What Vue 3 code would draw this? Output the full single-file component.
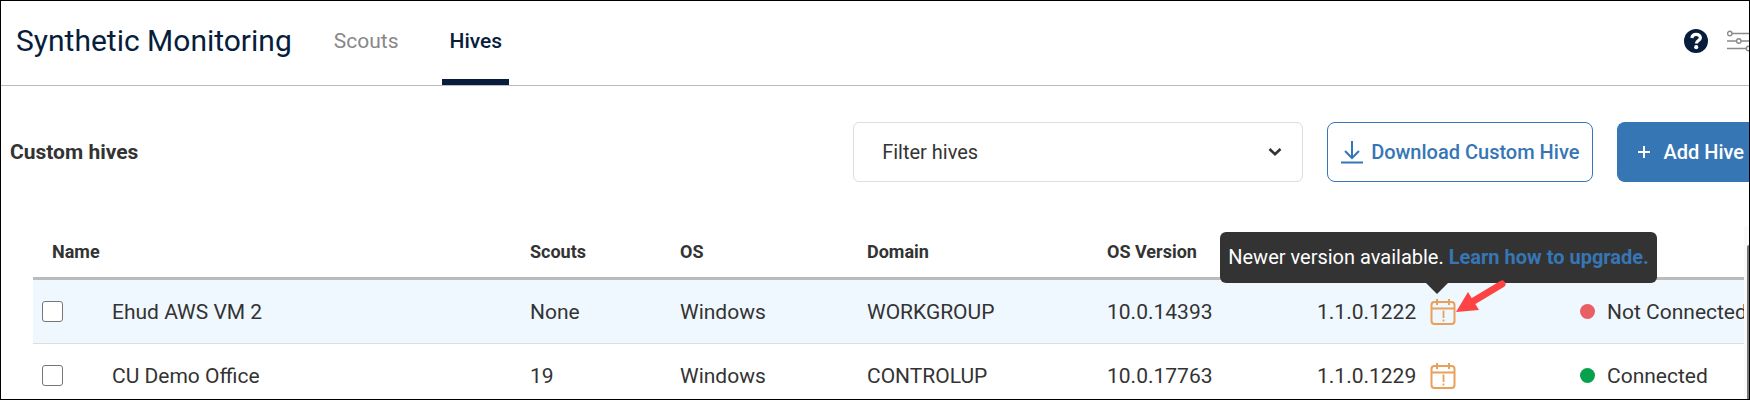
<template>
    <div class="page">
        <header class="topbar">
            <h1 class="title">Synthetic Monitoring</h1>
            <nav class="tabs">
                <a v-for="tab in tabs" :key="tab" href="#" class="tab" :class="{ active: tab === current }"
                    @click.prevent="current = tab">{{ tab }}</a>
            </nav>
            <div class="tools">
                <button class="icon_btn" type="button" aria-label="Help">
                    <svg width="24" height="24" viewBox="0 0 24 24">
                        <circle cx="12" cy="12" r="12" fill="#071d3b" />
                        <path d="M7.800 9 C8.300 6.400 10 5.400 12.100 5.400 C14.500 5.400 16.400 6.800 16.400 8.800 C16.400 11.600 12.400 11.500 12.400 14.500"
                            fill="none" stroke="#fff" stroke-width="3.200" />
                        <circle cx="12.200" cy="18.200" r="2.100" fill="#fff" />
                    </svg>
                </button>
                <button class="icon_btn" type="button" aria-label="Settings">
                    <svg width="22" height="22" viewBox="0 0 22 22" fill="none" stroke="#8b8b8b" stroke-width="1.400">
                        <path d="M5 3.500H22M0 11H9M14 11H22M0 18.500H19" />
                        <circle cx="2.800" cy="3.500" r="2.200" />
                        <circle cx="11.800" cy="11" r="2.200" />
                        <circle cx="21.500" cy="18.500" r="2.200" />
                    </svg>
                </button>
            </div>
        </header>

        <section class="toolbar">
            <h2 class="subtitle">Custom hives</h2>
            <div class="filter">
                <select v-model="filter" aria-label="Filter hives">
                    <option value="">Filter hives</option>
                </select>
                <svg class="chevron" width="14" height="10" viewBox="0 0 14 10">
                    <path d="M1.500 2L7 7.300L12.500 2" fill="none" stroke="#333" stroke-width="2.600" />
                </svg>
            </div>
            <button class="btn download" type="button">
                <svg width="22" height="24" viewBox="0 0 22 24" fill="none" stroke="#3676b5" stroke-width="2">
                    <path d="M11 1V18M4 11L11 18L18 11M0 22.500H22" />
                </svg>
                Download Custom Hive
            </button>
            <button class="btn add" type="button">
                <svg width="12" height="12" viewBox="0 0 12 12">
                    <path d="M6 0V12M0 6H12" stroke="#fff" stroke-width="2" />
                </svg>
                Add Hive
            </button>
        </section>

        <div class="list">
            <table>
                <colgroup>
                    <col class="c_check">
                    <col class="c_name">
                    <col class="c_scouts">
                    <col class="c_os">
                    <col class="c_domain">
                    <col class="c_osver">
                    <col class="c_version">
                    <col class="c_status">
                </colgroup>
                <thead>
                    <tr>
                        <th colspan="2" class="first">Name</th>
                        <th>Scouts</th>
                        <th>OS</th>
                        <th>Domain</th>
                        <th>OS Version</th>
                        <th></th>
                        <th></th>
                    </tr>
                </thead>
                <tbody>
                    <tr v-for="(hive, i) in hives" :key="hive.name" :class="{ hovered: i === 0 }">
                        <td class="check"><input type="checkbox" v-model="hive.checked" :aria-label="hive.name"></td>
                        <td>{{ hive.name }}</td>
                        <td>{{ hive.scouts }}</td>
                        <td>{{ hive.os }}</td>
                        <td>{{ hive.domain }}</td>
                        <td>{{ hive.osVersion }}</td>
                        <td>
                            <div class="version">
                                {{ hive.version }}
                                <span class="update">
                                    <svg width="26" height="26" viewBox="0 0 26 26" fill="none" stroke="#e9a05b" stroke-width="2">
                                        <rect x="1.500" y="3" width="23" height="22" rx="3" />
                                        <path d="M2 9.500H24M7 0V6M19 0V6" />
                                        <path d="M13.500 11.500V19M13.500 20.500V22.500" stroke-width="1.800" />
                                    </svg>
                                    <span v-if="i === 0" class="tooltip" role="tooltip">
                                        Newer version available. <a href="#">Learn how to upgrade.</a>
                                    </span>
                                    <svg v-if="i === 0" class="pointer" width="52" height="34" viewBox="0 0 52 34">
                                        <path d="M46 5L16 23" stroke="#fd4343" stroke-width="7" stroke-linecap="round" />
                                        <path d="M0 33L12 13L23 31Z" fill="#fd4343" />
                                    </svg>
                                </span>
                            </div>
                        </td>
                        <td>
                            <div class="status">
                                <i class="dot" :class="{ on: hive.connected }"></i>
                                {{ hive.connected ? 'Connected' : 'Not Connected' }}
                            </div>
                        </td>
                    </tr>
                </tbody>
            </table>
            <div class="scroll">
                <div class="thumb"></div>
            </div>
        </div>
    </div>
</template>

<script setup lang='js'>
import { ref } from 'vue'

const tabs = ['Scouts', 'Hives'];
const current = ref('Hives');
const filter = ref('');

const hives = ref([
    { name: 'Ehud AWS VM 2', scouts: 'None', os: 'Windows', domain: 'WORKGROUP', osVersion: '10.0.14393', version: '1.1.0.1222', connected: false, checked: false },
    { name: 'CU Demo Office', scouts: '19', os: 'Windows', domain: 'CONTROLUP', osVersion: '10.0.17763', version: '1.1.0.1229', connected: true, checked: false },
]);
</script>

<style>
body {
    margin: 0;
    background: #fff;
}
</style>

<style scoped>
.page {
    height: 100vh;
    box-sizing: border-box;
    overflow: hidden;
    border: 1px solid #000;
    font-family: Roboto, "Liberation Sans", sans-serif;
    font-size: 21px;
    color: #333;
}

.topbar {
    display: flex;
    height: 84px;
    padding-left: 15px;
    border-bottom: 1px solid #bbb;
    color: #071d3b;
}

.title {
    margin: 0;
    font-size: 30px;
    line-height: 80px;
    font-weight: 400;
}

.tabs {
    display: flex;
    gap: 37px;
    margin-left: 35px;
}

.tab {
    box-sizing: border-box;
    padding: 0 7px;
    line-height: 80px;
    color: #888;
    text-decoration: none;
}

.tab.active {
    border-bottom: 6px solid #071d3b;
    font-weight: 500;
    color: #071d3b;
}

.tools {
    display: flex;
    align-items: center;
    gap: 19px;
    height: 80px;
    margin-left: auto;
}

.icon_btn {
    display: flex;
    padding: 0;
    border: 0;
    background: none;
}

.toolbar {
    display: flex;
    align-items: center;
    gap: 24px;
    padding: 36px 0 44px 9px;
}

.subtitle {
    flex: 1;
    margin: 0;
    font-size: 21px;
    font-weight: 700;
}

.filter {
    position: relative;
    width: 450px;
}

.filter select {
    display: block;
    appearance: none;
    box-sizing: border-box;
    width: 100%;
    height: 60px;
    padding: 0 28px;
    border: 1px solid #ddd;
    border-radius: 6px;
    background: #fff;
    font: inherit;
    font-size: 20px;
    color: #333;
}

.chevron {
    position: absolute;
    right: 21px;
    top: 25px;
    pointer-events: none;
}

.btn {
    display: flex;
    align-items: center;
    box-sizing: border-box;
    height: 60px;
    border: 1px solid #3676b5;
    font: inherit;
    font-size: 20px;
    font-weight: 500;
    white-space: nowrap;
}

.download {
    gap: 8px;
    padding: 0 13px;
    border-radius: 8px;
    background: #fff;
    color: #3676b5;
}

.add {
    gap: 13px;
    padding: 0 5px 0 20px;
    border-radius: 8px 0 0 8px;
    border-right: 0;
    background: #3676b5;
    color: #fff;
}

.list {
    display: flex;
    padding-left: 32px;
}

table {
    flex: 1;
    table-layout: fixed;
    width: 100%;
    border-collapse: separate;
    border-spacing: 0;
}

.c_check {
    width: 79px;
}

.c_name {
    width: 418px;
}

.c_scouts {
    width: 150px;
}

.c_os {
    width: 187px;
}

.c_domain {
    width: 240px;
}

.c_osver {
    width: 210px;
}

.c_version {
    width: 263px;
}

.c_status {
    width: 164px;
}

th {
    height: 51px;
    padding: 0;
    border-bottom: 3px solid #bbb;
    font-size: 18px;
    font-weight: 700;
    text-align: left;
}

th.first {
    padding-left: 19px;
}

td {
    height: 63px;
    padding: 0;
    border-bottom: 1px solid #ddd;
    white-space: nowrap;
}

.hovered td {
    background: #f0f8ff;
}

.check {
    padding-left: 9px;
}

.check input {
    display: block;
    appearance: none;
    box-sizing: border-box;
    width: 21px;
    height: 21px;
    margin: 0;
    border: 1px solid #767676;
    border-radius: 3px;
    background: #fff;
}

.version {
    display: flex;
    align-items: center;
    gap: 14px;
}

.update {
    position: relative;
    display: flex;
}

.tooltip {
    position: absolute;
    left: -210px;
    bottom: 42px;
    padding: 0 8px;
    border-radius: 6px;
    background: #333;
    font-size: 20px;
    line-height: 51px;
    color: #fff;
}

.tooltip::after {
    content: "";
    position: absolute;
    left: 206px;
    top: 100%;
    border: 11px solid transparent;
    border-top-color: #333;
    border-bottom: 0;
}

.tooltip a {
    font-weight: 700;
    color: #3676b5;
    text-decoration: none;
}

.pointer {
    position: absolute;
    left: 26px;
    top: -20px;
}

.status {
    display: flex;
    align-items: center;
    gap: 12px;
    overflow: hidden;
}

.dot {
    flex: none;
    width: 15px;
    height: 15px;
    border-radius: 50%;
    background: #e95f66;
}

.dot.on {
    background: #07a14e;
}

.scroll {
    width: 5px;
    background: #fafafa;
}

.thumb {
    height: 100%;
    margin: 19px 0 0 3px;
    border-radius: 2px 0 0 0;
    background: #777;
}
</style>
